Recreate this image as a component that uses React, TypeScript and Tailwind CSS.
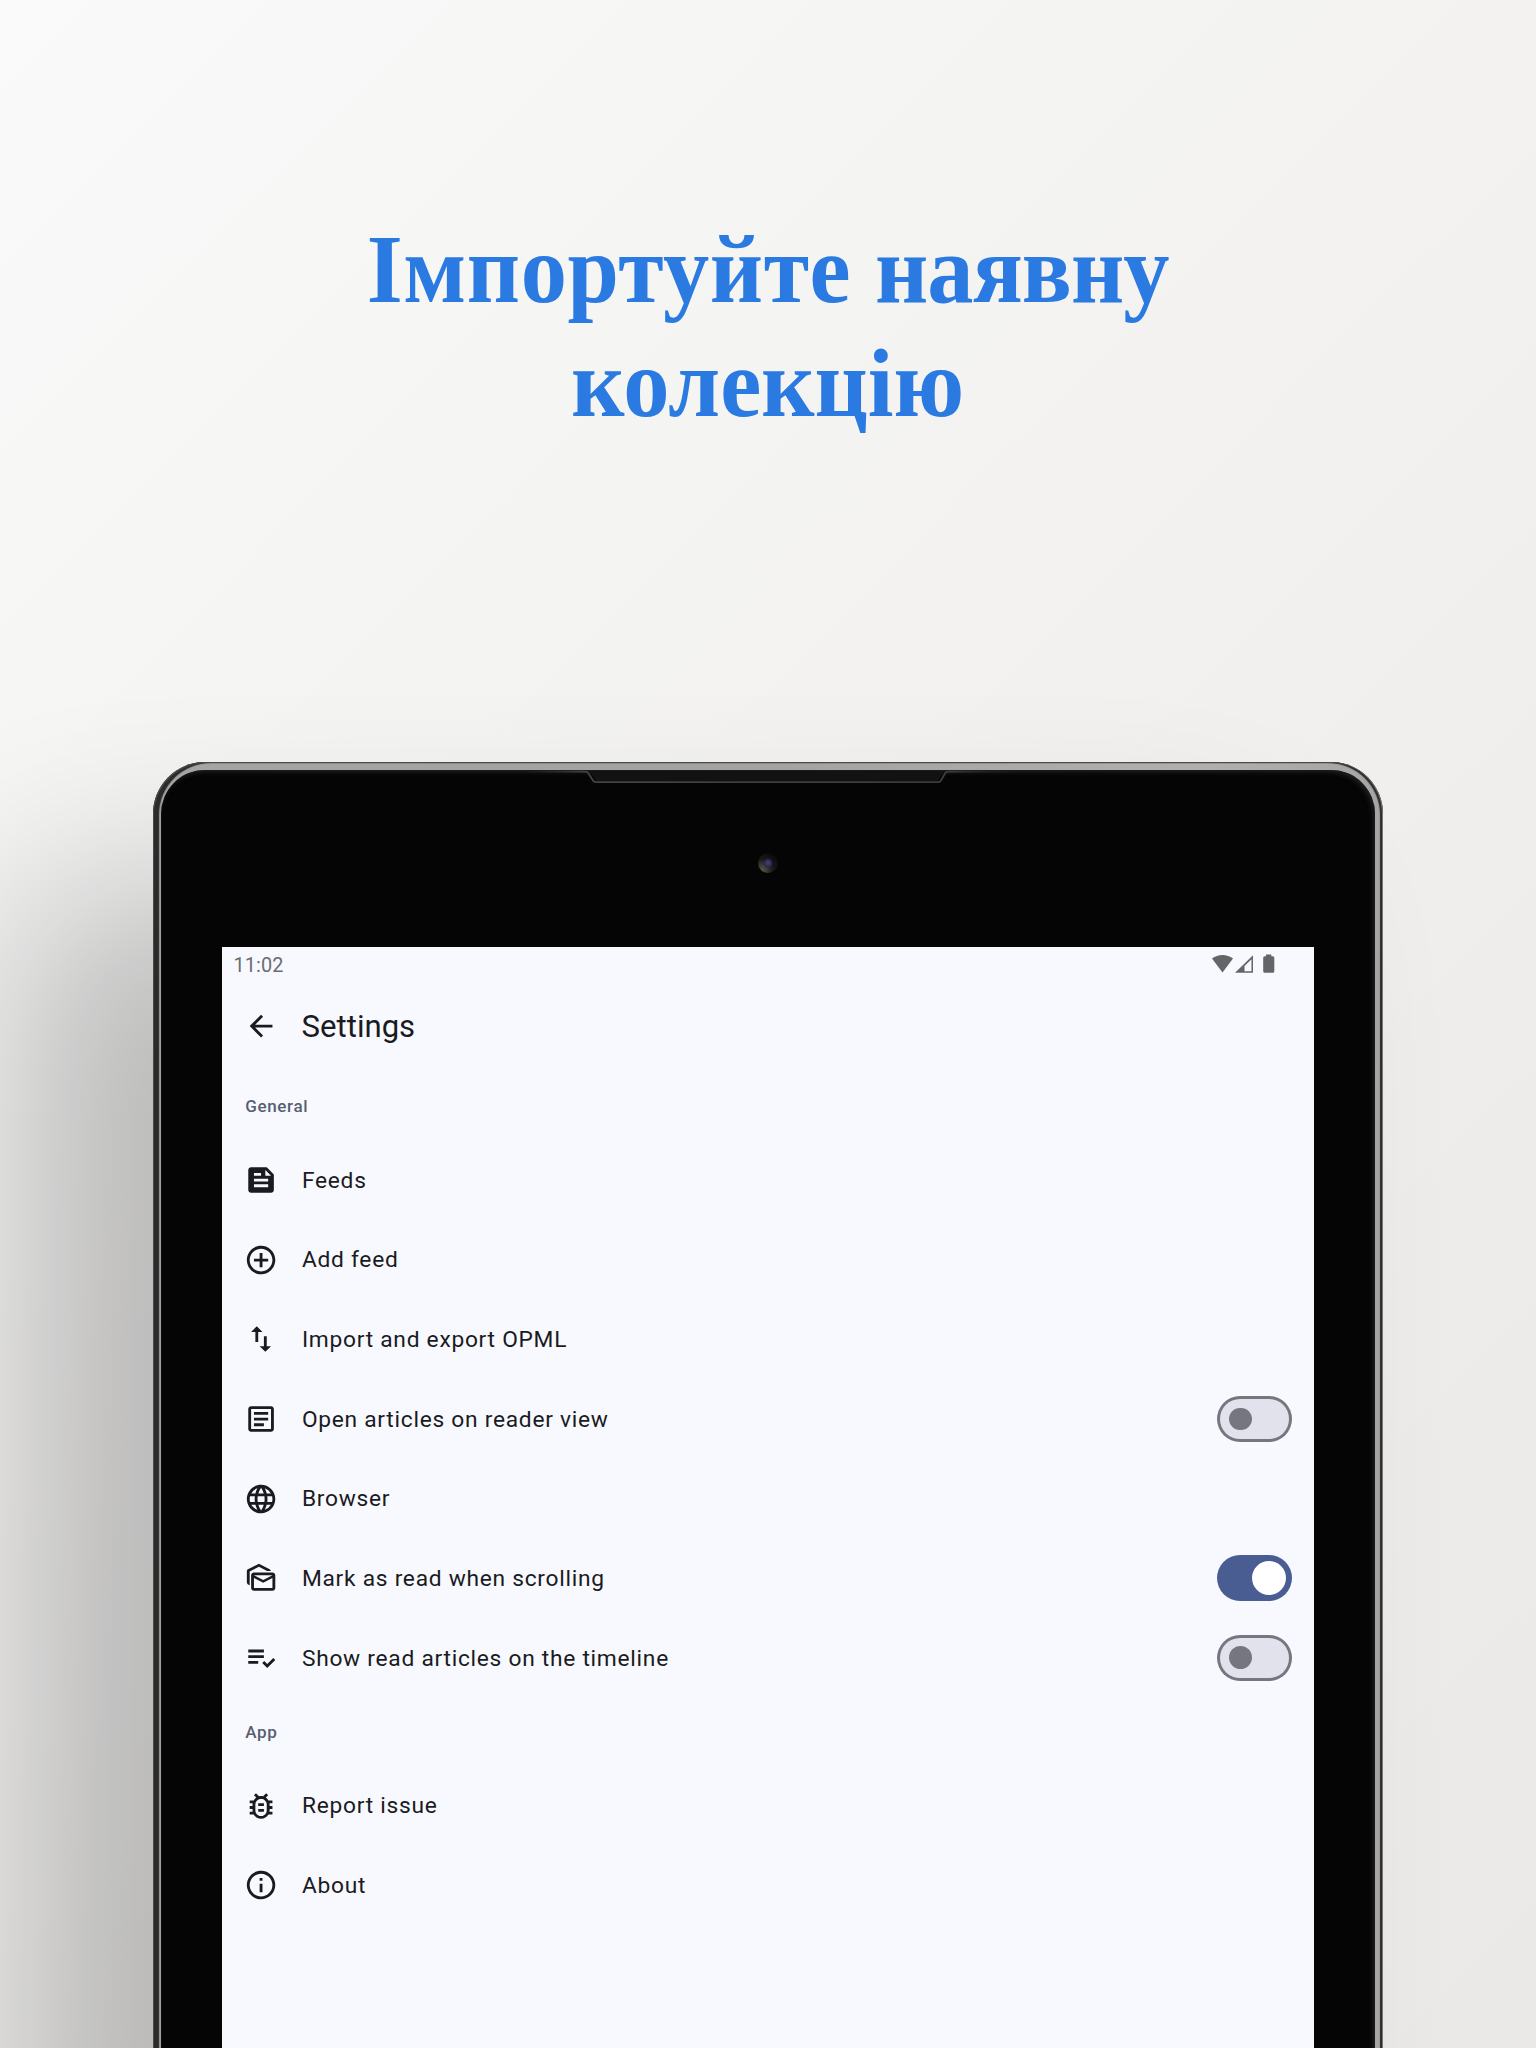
import type { ReactNode } from "react";
import {
  MdArrowBack,
  MdFeed,
  MdAddCircleOutline,
  MdImportExport,
  MdOutlineArticle,
  MdLanguage,
  MdOutlineMarkAsUnread,
  MdPlaylistAddCheck,
  MdOutlineBugReport,
  MdOutlineInfo,
} from "react-icons/md";

type Item = { icon: ReactNode; label: string; toggle?: boolean };

const general: Item[] = [
  { icon: <MdFeed />, label: "Feeds" },
  { icon: <MdAddCircleOutline />, label: "Add feed" },
  { icon: <MdImportExport />, label: "Import and export OPML" },
  { icon: <MdOutlineArticle />, label: "Open articles on reader view", toggle: false },
  { icon: <MdLanguage />, label: "Browser" },
  { icon: <MdOutlineMarkAsUnread />, label: "Mark as read when scrolling", toggle: true },
  { icon: <MdPlaylistAddCheck />, label: "Show read articles on the timeline", toggle: false },
];

const app: Item[] = [
  { icon: <MdOutlineBugReport />, label: "Report issue" },
  { icon: <MdOutlineInfo />, label: "About" },
];

function Toggle({ on }: { on: boolean }) {
  return on ? (
    <span className="flex h-[45.5px] w-[74.5px] items-center justify-end rounded-full bg-[#495d92] pr-[5.7px]">
      <span className="size-[34.1px] rounded-full bg-white" />
    </span>
  ) : (
    <span className="flex h-[45.5px] w-[74.5px] items-center rounded-full bg-[#757680] p-[2.8px]">
      <span className="flex h-full w-full items-center rounded-full bg-[#e2e2ec] pl-[9.1px]">
        <span className="size-[22.8px] rounded-full bg-[#757680]" />
      </span>
    </span>
  );
}

function Section({ title, items }: { title: string; items: Item[] }) {
  return (
    <section>
      <h2 className="flex h-[68.25px] items-center pt-[2px] pl-[23.3px] text-[17.06px] font-medium tracking-[0.6px] text-[#585e71]">
        {title}
      </h2>
      {items.map((item) => (
        <div key={item.label} className="flex h-[79.63px] items-center pr-[22.5px] pl-[22.3px]">
          <span className="text-[34.13px] text-[#1a1b21]">{item.icon}</span>
          <span className="ml-[23.5px] flex-1 pt-[1.5px] text-[22.75px] tracking-[0.73px] text-[#1a1b21]">
            {item.label}
          </span>
          {item.toggle !== undefined && <Toggle on={item.toggle} />}
        </div>
      ))}
    </section>
  );
}

function StatusIcons() {
  return (
    <svg width="64" height="20" viewBox="0 0 64 20" fill="#636569">
      <path d="M0 4.600C3 2 6.600 .9 10.500 .9S18 2 21 4.600L10.500 18.400Z" />
      <path fillRule="evenodd" d="M23 18.800 41 1.200V18.800ZM32.500 17.200H39.500V5.200L32.500 12Z" />
      <path d="M51.200 3.800Q51.200 2.300 52.700 2.300H54V.6H59.300V2.300H60.800Q62.300 2.300 62.300 3.800V17.300Q62.300 18.800 60.800 18.800H52.700Q51.200 18.800 51.200 17.300Z" />
    </svg>
  );
}

export default function App() {
  return (
    <div className="flex h-[2048px] w-[1536px] flex-col items-center overflow-hidden bg-linear-[135deg,#fafafa_0%,#f5f5f4_25%,#f2f1f0_50%,#edecea_75%,#eae9e7_100%]">
      <h1 className="h-[762px] shrink-0 scale-x-[0.953] pt-[213px] text-center font-['Liberation_Serif',serif] text-[97px] leading-[114.4px] font-bold whitespace-nowrap text-[#2b7ae1]">
        <span className="tracking-[0.6px]">Імпортуйте </span>
        <span className="tracking-[-0.9px]">наявну</span>
        <br />
        колекцію
      </h1>

      <div className="h-[1500px] w-[1230px] shrink-0 rounded-t-[52px] bg-[linear-gradient(90deg,#8a8a8a_0px,#a5a5a5_10px,#a3a3a3_50%,#b0b0b0_85%,#a5a5a5_100%)] px-[8px] pt-[8px] shadow-[inset_1px_1px_0px_#4a4a4a,inset_-1px_0px_0px_#777,inset_6px_1px_1px_#2b2b2b,inset_-3px_1px_1px_#2b2b2b,-135px_125px_190px_0px_rgba(0,0,0,0.23)]">
        <div className="flex h-full w-full flex-col items-center rounded-t-[44px] bg-[#050505] shadow-[inset_-2px_2px_5px_#222]">
          <svg className="shrink-0" width="520" height="14" viewBox="0 0 520 14" fill="none">
            <defs>
              <linearGradient id="lip" gradientUnits="userSpaceOnUse" x1="12" y1="0" x2="515" y2="0">
                <stop offset="0" stopColor="#333" stopOpacity="0" />
                <stop offset=".13" stopColor="#444" />
                <stop offset=".86" stopColor="#3c3c3c" />
                <stop offset="1" stopColor="#222" stopOpacity="0" />
              </linearGradient>
            </defs>
            <path d="M82 1H436L430 11H88Z" fill="#121212" />
            <path
              d="M12 1.700H77Q79.500 1.700 80.500 3.500L85 10.500Q86 12.200 88 12.200H430Q432 12.200 433 10.500L437 3.500Q438 1.700 440.500 1.700H515"
              stroke="url(#lip)"
              strokeWidth="1.800"
            />
          </svg>
          <div className="mt-[69px] flex size-[20px] shrink-0 items-center justify-center rounded-full bg-[radial-gradient(circle_at_20%_85%,#55554f_0%,#1a1a1a_45%,#0b0b0d_75%)]">
            <div className="size-[8px] rounded-full bg-[radial-gradient(circle,#44447a_0%,#26264a_70%)]" />
          </div>

          <main className="mt-[74px] w-[1092px] flex-1 bg-[#f8f9ff] font-[Roboto,sans-serif]">
            <div className="flex h-[34px] items-center justify-between pr-[38px] pl-[11.5px] text-[19.9px] text-[#6b6d71]">
              <span className="pt-[3px] tracking-[0.1px]">11:02</span>
              <StatusIcons />
            </div>
            <header className="flex h-[91px] items-center px-[22.3px]">
              <MdArrowBack className="size-[34.13px] text-[#1a1b21]" />
              <span className="ml-[23.2px] pt-[1.5px] text-[31.1px] text-[#1a1b21]">Settings</span>
            </header>
            <Section title="General" items={general} />
            <Section title="App" items={app} />
          </main>
        </div>
      </div>
    </div>
  );
}
